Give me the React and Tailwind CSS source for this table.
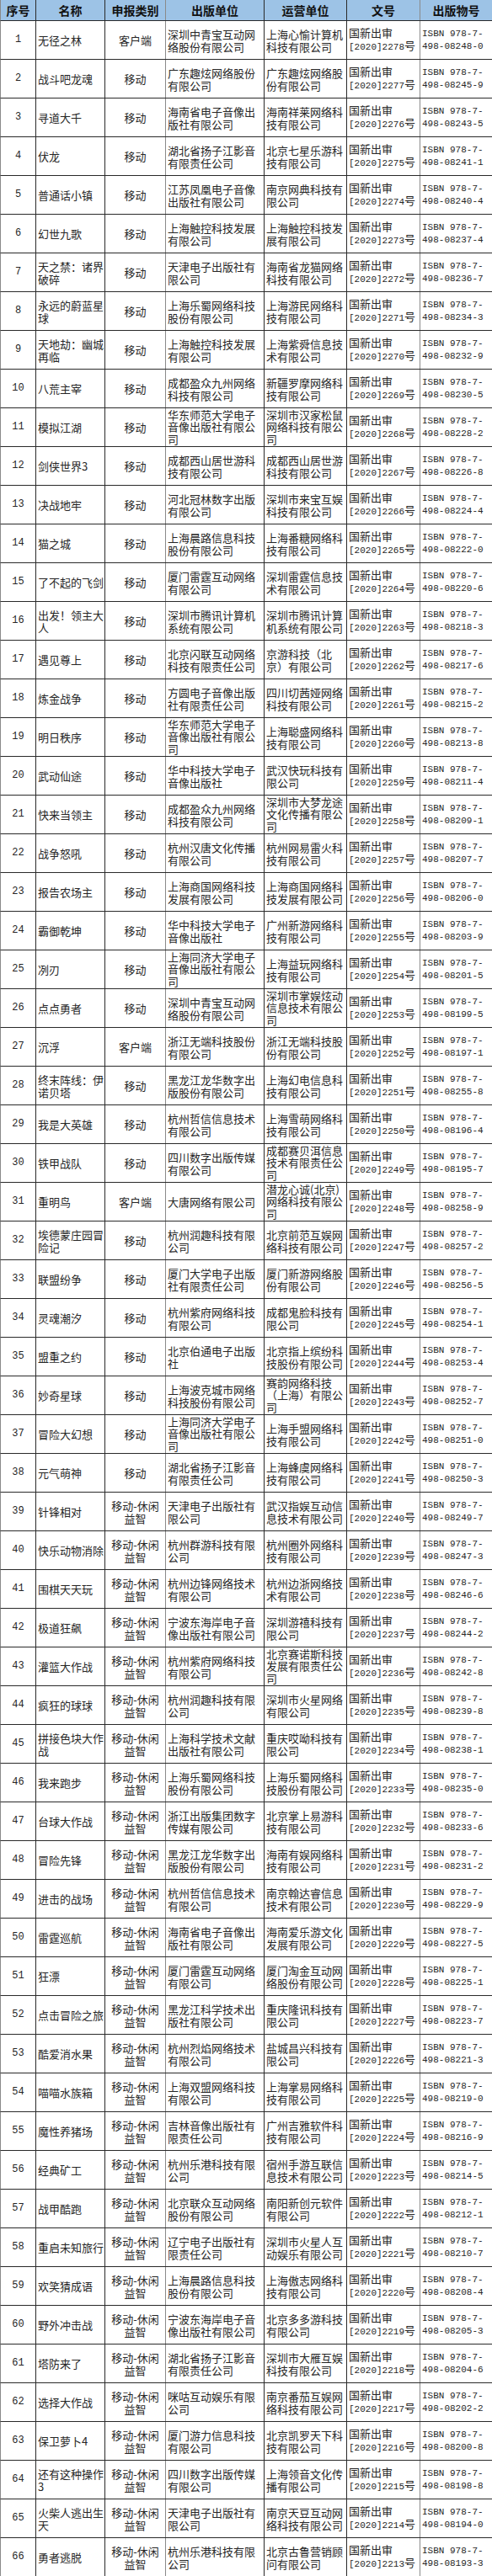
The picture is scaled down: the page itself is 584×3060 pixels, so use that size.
import React from 'react'

// 66 entries: name, kind, publisher, operator, isbn tail
// kind: k = 客户端, m = 移动, x = 移动-休闲益智
// "|" marks a line break, matching the reference wrap
const data = [
  ['无径之林', 'k', '深圳中青宝互动网|络股份有限公司', '上海心愉计算机|科技有限公司', '08248-0'],
  ['战斗吧龙魂', 'm', '广东趣炫网络股份|有限公司', '广东趣炫网络股|份有限公司', '08245-9'],
  ['寻道大千', 'm', '海南省电子音像出|版社有限公司', '海南祥莱网络科|技有限公司', '08243-5'],
  ['伏龙', 'm', '湖北省扬子江影音|有限责任公司', '北京七星乐游科|技有限公司', '08241-1'],
  ['普通话小镇', 'm', '江苏凤凰电子音像|出版社有限公司', '南京网典科技有|限公司', '08240-4'],
  ['幻世九歌', 'm', '上海触控科技发展|有限公司', '上海触控科技发|展有限公司', '08237-4'],
  ['天之禁：诸界|破碎', 'm', '天津电子出版社有|限公司', '海南省龙猫网络|科技有限公司', '08236-7'],
  ['永远的蔚蓝星|球', 'm', '上海乐蜀网络科技|股份有限公司', '上海游民网络科|技有限公司', '08234-3'],
  ['天地劫：幽城|再临', 'm', '上海触控科技发展|有限公司', '上海紫舜信息技|术有限公司', '08232-9'],
  ['八荒主宰', 'm', '成都盈众九州网络|科技有限公司', '新疆罗摩网络科|技有限公司', '08230-5'],
  ['模拟江湖', 'm', '华东师范大学电子|音像出版社有限公|司', '深圳市汉家松鼠|网络科技有限公|司', '08228-2'],
  ['剑侠世界3', 'm', '成都西山居世游科|技有限公司', '成都西山居世游|科技有限公司', '08226-8'],
  ['决战地牢', 'm', '河北冠林数字出版|有限公司', '深圳市来宝互娱|科技有限公司', '08224-4'],
  ['猫之城', 'm', '上海晨路信息科技|股份有限公司', '上海番糖网络科|技有限公司', '08222-0'],
  ['了不起的飞剑', 'm', '厦门雷霆互动网络|有限公司', '深圳雷霆信息技|术有限公司', '08220-6'],
  ['出发！领主大|人', 'm', '深圳市腾讯计算机|系统有限公司', '深圳市腾讯计算|机系统有限公司', '08218-3'],
  ['遇见尊上', 'm', '北京闪联互动网络|科技有限责任公司', '京游科技（北|京）有限公司', '08217-6'],
  ['炼金战争', 'm', '方圆电子音像出版|社有限责任公司', '四川切茜娅网络|科技有限公司', '08215-2'],
  ['明日秩序', 'm', '华东师范大学电子|音像出版社有限公|司', '上海聪盛网络科|技有限公司', '08213-8'],
  ['武动仙途', 'm', '华中科技大学电子|音像出版社', '武汉快玩科技有|限公司', '08211-4'],
  ['快来当领主', 'm', '成都盈众九州网络|科技有限公司', '深圳市大梦龙途|文化传播有限公|司', '08209-1'],
  ['战争怒吼', 'm', '杭州汉唐文化传播|有限公司', '杭州网易雷火科|技有限公司', '08207-7'],
  ['报告农场主', 'm', '上海商国网络科技|发展有限公司', '上海商国网络科|技发展有限公司', '08206-0'],
  ['霸御乾坤', 'm', '华中科技大学电子|音像出版社', '广州新游网络科|技有限公司', '08203-9'],
  ['冽刃', 'm', '上海同济大学电子|音像出版社有限公|司', '上海益玩网络科|技有限公司', '08201-5'],
  ['点点勇者', 'm', '深圳中青宝互动网|络股份有限公司', '深圳市掌娱炫动|信息技术有限公|司', '08199-5'],
  ['沉浮', 'k', '浙江无端科技股份|有限公司', '浙江无端科技股|份有限公司', '08197-1'],
  ['终末阵线：伊|诺贝塔', 'm', '黑龙江龙华数字出|版股份有限公司', '上海幻电信息科|技有限公司', '08255-8'],
  ['我是大英雄', 'm', '杭州哲信信息技术|有限公司', '上海雪萌网络科|技有限公司', '08196-4'],
  ['铁甲战队', 'm', '四川数字出版传媒|有限公司', '成都赛贝洱信息|技术有限责任公|司', '08195-7'],
  ['重明鸟', 'k', '大唐网络有限公司', '潜龙心诚(北京)|网络科技有限公|司', '08258-9'],
  ['埃德蒙庄园冒|险记', 'm', '杭州润趣科技有限|公司', '北京前范互娱网|络科技有限公司', '08257-2'],
  ['联盟纷争', 'm', '厦门大学电子出版|社有限责任公司', '厦门新游网络股|份有限公司', '08256-5'],
  ['灵魂潮汐', 'm', '杭州紫府网络科技|有限公司', '成都鬼脸科技有|限公司', '08254-1'],
  ['盟重之约', 'm', '北京伯通电子出版|社', '北京指上缤纷科|技股份有限公司', '08253-4'],
  ['妙奇星球', 'm', '上海波克城市网络|科技股份有限公司', '赛韵网络科技|（上海）有限公|司', '08252-7'],
  ['冒险大幻想', 'm', '上海同济大学电子|音像出版社有限公|司', '上海手盟网络科|技有限公司', '08251-0'],
  ['元气萌神', 'm', '湖北省扬子江影音|有限责任公司', '上海蜂虞网络科|技有限公司', '08250-3'],
  ['针锋相对', 'x', '天津电子出版社有|限公司', '武汉指娱互动信|息技术有限公司', '08249-7'],
  ['快乐动物消除', 'x', '杭州群游科技有限|公司', '杭州圈外网络科|技有限公司', '08247-3'],
  ['围棋天天玩', 'x', '杭州边锋网络技术|有限公司', '杭州边浙网络技|术有限公司', '08246-6'],
  ['极道狂飙', 'x', '宁波东海岸电子音|像出版社有限公司', '深圳游禧科技有|限公司', '08244-2'],
  ['灌篮大作战', 'x', '杭州紫府网络科技|有限公司', '北京赛诺斯科技|发展有限责任公|司', '08242-8'],
  ['疯狂的球球', 'x', '杭州润趣科技有限|公司', '深圳市火星网络|有限公司', '08239-8'],
  ['拼接色块大作|战', 'x', '上海科学技术文献|出版社有限公司', '重庆哎呦科技有|限公司', '08238-1'],
  ['我来跑步', 'x', '上海乐蜀网络科技|股份有限公司', '上海乐蜀网络科|技股份有限公司', '08235-0'],
  ['台球大作战', 'x', '浙江出版集团数字|传媒有限公司', '北京掌上易游科|技有限公司', '08233-6'],
  ['冒险先锋', 'x', '黑龙江龙华数字出|版股份有限公司', '海南有娱网络科|技有限公司', '08231-2'],
  ['进击的战场', 'x', '杭州哲信信息技术|有限公司', '南京翰达睿信息|技术有限公司', '08229-9'],
  ['雷霆巡航', 'x', '海南省电子音像出|版社有限公司', '海南爱乐游文化|发展有限公司', '08227-5'],
  ['狂漂', 'x', '厦门雷霆互动网络|有限公司', '厦门淘金互动网|络股份有限公司', '08225-1'],
  ['点击冒险之旅', 'x', '黑龙江科学技术出|版社有限公司', '重庆隆讯科技有|限公司', '08223-7'],
  ['酷爱消水果', 'x', '杭州烈焰网络技术|有限公司', '盐城昌兴科技有|限公司', '08221-3'],
  ['喵喵水族箱', 'x', '上海双盟网络科技|有限公司', '上海掌易网络科|技有限公司', '08219-0'],
  ['魔性养猪场', 'x', '吉林音像出版社有|限责任公司', '广州吉雅软件科|技有限公司', '08216-9'],
  ['经典矿工', 'x', '杭州乐港科技有限|公司', '宿州手游互联信|息技术有限公司', '08214-5'],
  ['战甲酷跑', 'x', '北京联众互动网络|股份有限公司', '南阳新创元软件|有限公司', '08212-1'],
  ['重启未知旅行', 'x', '辽宁电子出版社有|限责任公司', '深圳市火星人互|动娱乐有限公司', '08210-7'],
  ['欢笑猜成语', 'x', '上海晨路信息科技|股份有限公司', '上海傲志网络科|技有限公司', '08208-4'],
  ['野外冲击战', 'x', '宁波东海岸电子音|像出版社有限公司', '北京多多游科技|有限公司', '08205-3'],
  ['塔防来了', 'x', '湖北省扬子江影音|有限责任公司', '深圳市大雁互娱|科技有限公司', '08204-6'],
  ['选择大作战', 'x', '咪咕互动娱乐有限|公司', '南京番茄互娱网|络科技有限公司', '08202-2'],
  ['保卫萝卜4', 'x', '厦门游力信息科技|有限公司', '北京凯罗天下科|技有限公司', '08200-8'],
  ['还有这种操作|3', 'x', '四川数字出版传媒|有限公司', '上海领音文化传|播有限公司', '08198-8'],
  ['火柴人逃出生|天', 'x', '天津电子出版社有|限公司', '南京天豆互动网|络科技有限公司', '08194-0'],
  ['勇者逃脱', 'x', '杭州乐港科技有限|公司', '北京古鲁营销顾|问有限公司', '08193-3'],
]

const kinds = { k: '客户端', m: '移动', x: '移动-休闲|益智' }

const grid = 'grid grid-cols-[42px_82px_72px_117px_98px_87px_86px]'
const mono = "font-['Liberation_Mono',monospace]"

const Lines = ({ text }) => {
  const parts = text.split('|')
  const tight = parts.length > 2
  return (
    <>
      {parts.map((line, i) => (
        <div key={i} className={`whitespace-pre ${tight ? 'leading-[14.5px]' : ''}`}>
          {line}
        </div>
      ))}
    </>
  )
}

const Cell = ({ children, center, gray }) => (
  <div
    className={`flex flex-col justify-center border-r ${
      gray ? 'border-r-[#8a8a8a]' : 'border-r-[#2a2a2a]'
    } ${center ? 'items-center text-center' : 'items-start pl-[2px]'}`}
  >
    {children}
  </div>
)

const headers = ['序号', '名称', '申报类别', '出版单位', '运营单位', '文号', '出版物号']

export default function App() {
  return (
    <div className="w-[584px] bg-white text-[#262626] font-['Noto_Sans_CJK_SC',sans-serif] text-[13px] leading-[15px]">
      <div className={`${grid} h-[25px] bg-[#9dc3e6] border-b border-[#2a2a2a] border-l border-l-[#8a8a8a]`}>
        {headers.map((h, i) => (
          <div
            key={h}
            className={`flex items-center justify-center font-bold text-[14px] text-[#111] border-r ${
              i === 2 || i === 5 ? 'border-r-[#8a8a8a]' : 'border-r-[#2a2a2a]'
            }`}
          >
            {h}
          </div>
        ))}
      </div>

      {data.map(([name, kind, pub, op, isbn], idx) => {
        const n = idx + 1
        return (
          <div key={n} className={`${grid} h-[46px] border-b border-[#2a2a2a] border-l border-l-[#8a8a8a]`}>
            <Cell center>
              <span className={`${mono} text-[12px]`}>{n}</span>
            </Cell>
            <Cell>
              <Lines text={name} />
            </Cell>
            <Cell center gray>
              <Lines text={kinds[kind]} />
            </Cell>
            <Cell>
              <Lines text={pub} />
            </Cell>
            <Cell>
              <Lines text={op} />
            </Cell>
            <Cell gray>
              <div>国新出审</div>
              <div className="whitespace-nowrap">
                <span className={`${mono} text-[11px]`}>[2020]{2279 - n}</span>号
              </div>
            </Cell>
            <Cell>
              <div className={`${mono} text-[11px] whitespace-pre`}>ISBN 978-7-</div>
              <div className={`${mono} text-[11px] whitespace-pre`}>498-{isbn}</div>
            </Cell>
          </div>
        )
      })}
    </div>
  )
}
